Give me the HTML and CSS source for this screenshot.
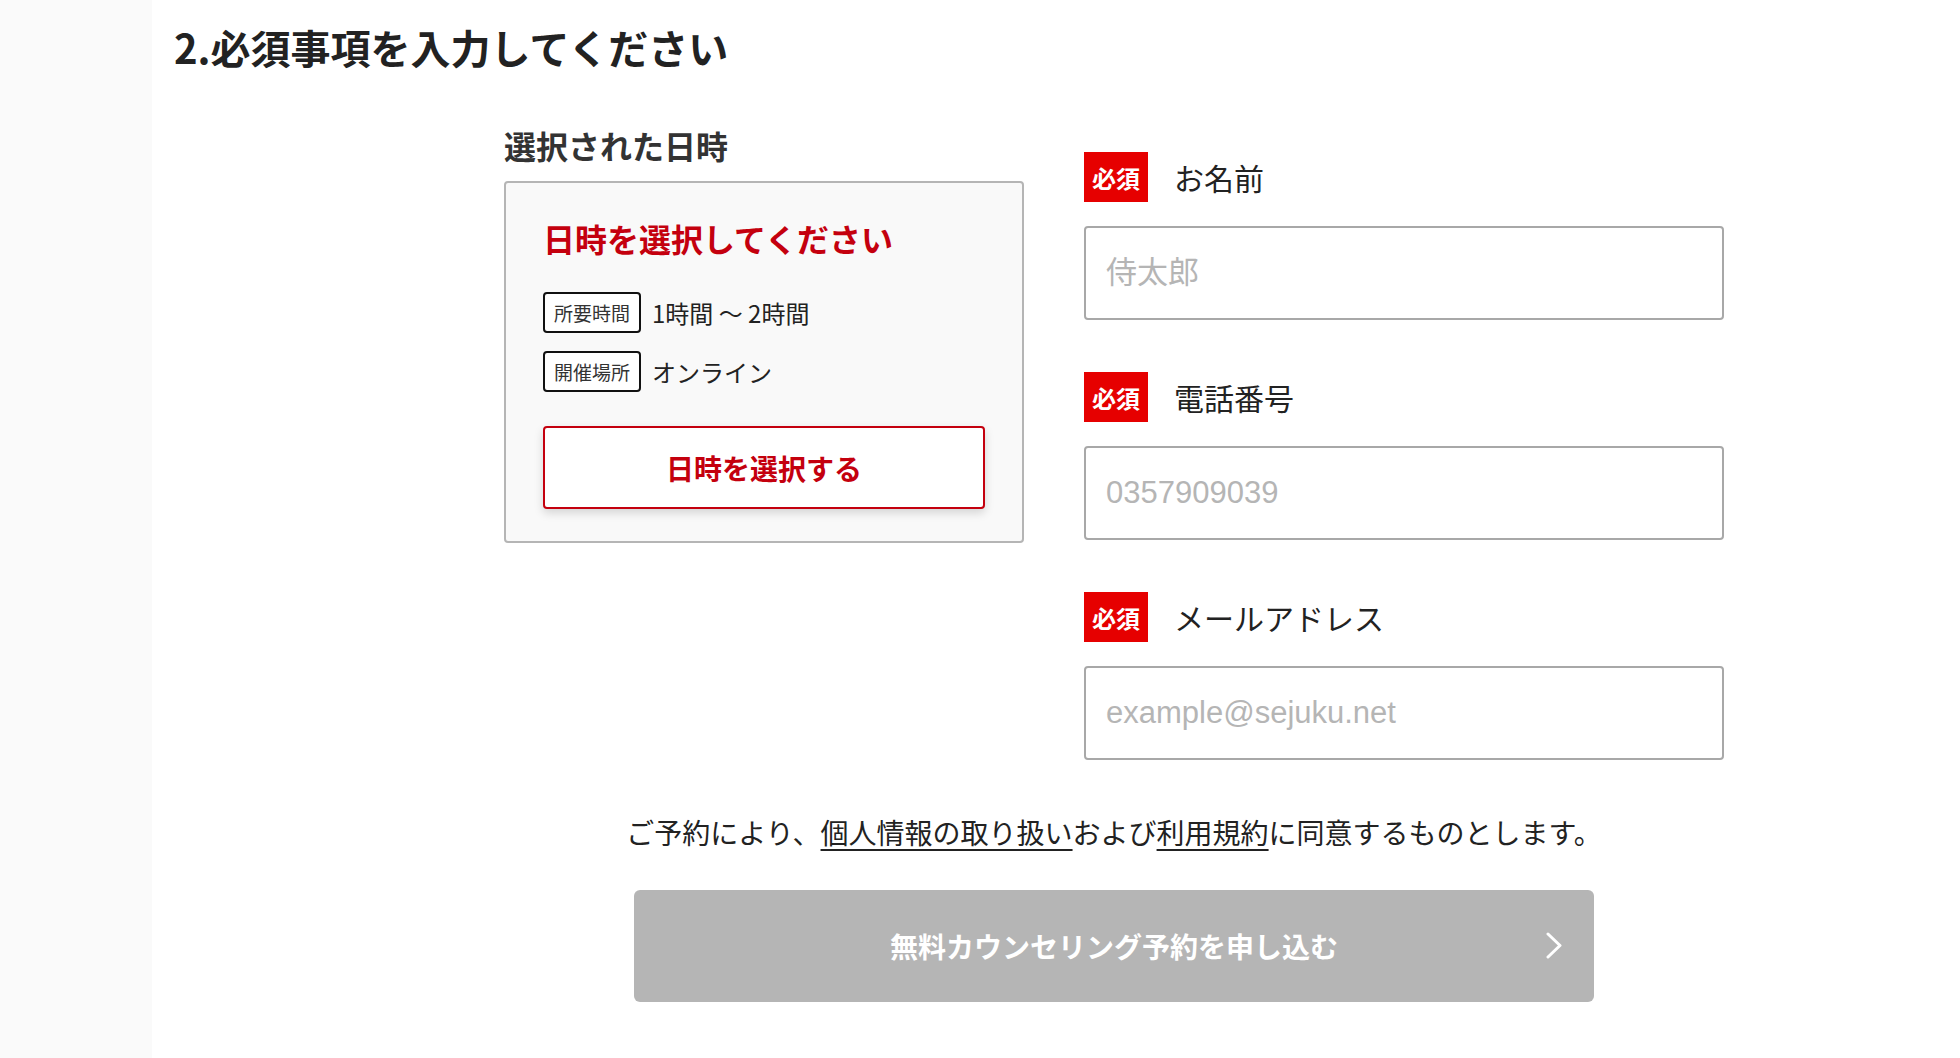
FILE: index.html
```html
<!DOCTYPE html>
<html lang="ja">
<head>
    <meta charset="UTF-8">
    <meta name="viewport" content="width=device-width, initial-scale=1.0">
    <title>無料カウンセリング予約</title>
    <link rel="stylesheet" href="styles.css">
</head>
<body>

    <div class="page">
        <aside class="side"></aside>

        <main class="main">
            <h2 class="title">2.必須事項を入力してください</h2>

            <div class="form">
                <div class="cols">
                    <section class="schedule">
                        <h3 class="schedule-label">選択された日時</h3>
                        <div class="schedule-card">
                            <p class="schedule-empty">日時を選択してください</p>
                            <div class="schedule-row">
                                <span class="tag">所要時間</span>
                                <span>1時間 〜 2時間</span>
                            </div>
                            <div class="schedule-row">
                                <span class="tag">開催場所</span>
                                <span>オンライン</span>
                            </div>
                            <button class="select-btn">日時を選択する</button>
                        </div>
                    </section>

                    <section class="fields">
                        <div class="field">
                            <label class="field-label"><span class="req">必須</span>お名前</label>
                            <input class="field-input" type="text" placeholder="侍太郎">
                        </div>
                        <div class="field">
                            <label class="field-label"><span class="req">必須</span>電話番号</label>
                            <input class="field-input" type="tel" placeholder="0357909039">
                        </div>
                        <div class="field">
                            <label class="field-label"><span class="req">必須</span>メールアドレス</label>
                            <input class="field-input" type="email" placeholder="example@sejuku.net">
                        </div>
                    </section>
                </div>

                <p class="agree">ご予約により、<a href="#">個人情報の取り扱い</a>および<a href="#">利用規約</a>に同意するものとします。</p>

                <button class="submit">
                    無料カウンセリング予約を申し込む
                    <svg class="chev" width="16" height="27" viewBox="0 0 16 27"><polyline points="2,2 14,13.5 2,25" fill="none" stroke="#fff" stroke-width="3" stroke-linecap="round" stroke-linejoin="round"/></svg>
                </button>
            </div>
        </main>
    </div>

</body>
</html>
```

FILE: styles.css
```css
body { margin: 0; font-family: "Noto Sans CJK JP", sans-serif; color: #222; background-color: #fff; }
.page { display: flex; min-height: 100vh; }
.side { width: 152px; flex-shrink: 0; background-color: #fafafa; }
.main { flex: 1; padding: 19px 22px 40px; }

.title { margin: 0; font-size: 40px; line-height: 56px; font-weight: bold; color: #222; }

.form { width: 1220px; margin: 46px 0 0 330px; }
.cols { display: grid; grid-template-columns: 520px 640px; column-gap: 60px; align-items: start; }

/* left column: selected date */
.schedule-label { margin: 0 0 12px; font-size: 32px; line-height: 48px; font-weight: bold; color: #333; }
.schedule-card { background-color: #f9f9f9; border: 2px solid #b5b5b5; border-radius: 4px; padding: 31px 37px 32px; }
.schedule-empty { margin: 0 0 30px; font-size: 32px; line-height: 48px; font-weight: bold; color: #c4000e; }
.schedule-row { display: flex; align-items: center; gap: 11px; margin-bottom: 18px; font-size: 24px; color: #222; }
.tag { display: inline-block; height: 37px; line-height: 37px; padding: 0 9px; border: 2px solid #111; border-radius: 4px; font-size: 19px; color: #333; background-color: #fff; }
.select-btn { display: block; width: 100%; height: 83px; margin-top: 34px; background-color: #fff; border: 2px solid #c4000e; border-radius: 4px; box-shadow: 0 4px 10px rgba(0, 0, 0, 0.15); font-family: "Noto Sans CJK JP", sans-serif; font-size: 28px; font-weight: bold; color: #c4000e; cursor: pointer; }

/* right column: fields */
.fields { margin-top: 31px; }
.field { margin-bottom: 52px; }
.field:last-child { margin-bottom: 0; }
.field-label { display: flex; align-items: center; gap: 26px; height: 50px; margin-bottom: 24px; font-size: 30px; color: #222; }
.req { display: inline-flex; align-items: center; justify-content: center; width: 64px; height: 50px; background-color: #e60000; color: #fff; font-size: 24px; font-weight: bold; }
.field-input { display: block; box-sizing: border-box; width: 100%; height: 94px; padding: 0 20px; border: 2px solid #a8a8a8; border-radius: 4px; font-family: "Liberation Sans", "Noto Sans CJK JP", sans-serif; font-size: 31px; color: #222; background-color: #fff; }
.field-input::placeholder { color: #b5b5b5; }

.agree { margin: 52px 0 0; text-align: center; font-size: 28px; line-height: 41px; color: #222; }
.agree a { color: #222; text-decoration: underline; text-underline-offset: 5px; }

.submit { position: relative; display: block; width: 960px; height: 112px; margin: 37px auto 0; border: none; border-radius: 6px; background-color: #b5b5b5; font-family: "Noto Sans CJK JP", sans-serif; font-size: 28px; font-weight: bold; color: #fff; cursor: pointer; }
.chev { position: absolute; right: 32px; top: 42px; }
```
